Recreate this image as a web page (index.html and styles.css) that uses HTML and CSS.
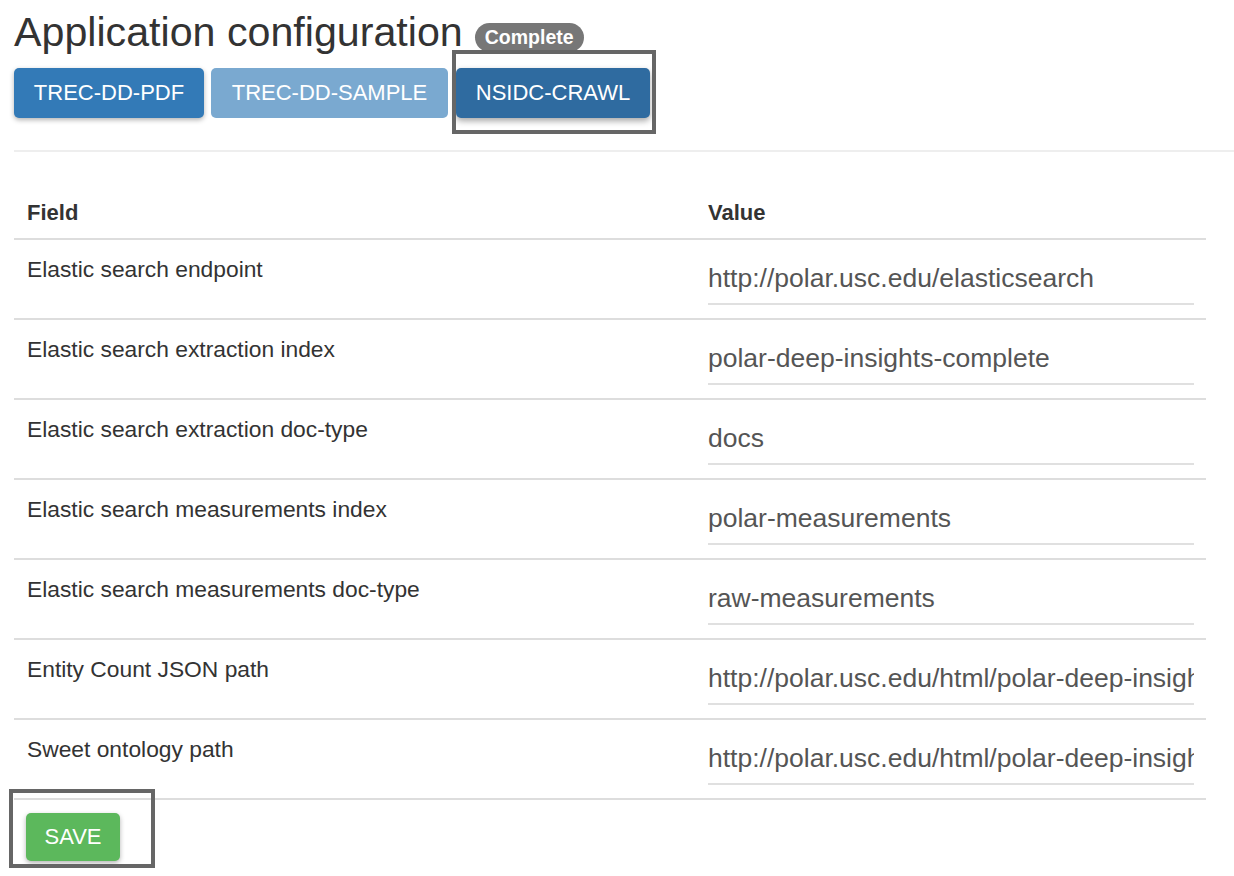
FILE: index.html
```html
<!DOCTYPE html>
<html>
<head>
<meta charset="utf-8">
<link rel="stylesheet" href="styles.css">
</head>
<body>
<div class="page">
  <div class="title-row">
    <h3 class="title">Application configuration</h3>
    <span class="badge">Complete</span>
  </div>
  <div class="tabs">
    <button class="btn btn-primary">TREC-DD-PDF</button>
    <button class="btn btn-disabled">TREC-DD-SAMPLE</button>
    <span class="highlight-wrap">
      <button class="btn btn-active">NSIDC-CRAWL</button>
      <span class="annot annot-tab"></span>
    </span>
  </div>
  <hr class="rule">
  <table class="cfg">
    <thead>
      <tr><th class="col-field">Field</th><th>Value</th></tr>
    </thead>
    <tbody>
      <tr><td class="label">Elastic search endpoint</td><td><input class="field" value="http://polar.usc.edu/elasticsearch"></td></tr>
      <tr><td class="label">Elastic search extraction index</td><td><input class="field" value="polar-deep-insights-complete"></td></tr>
      <tr><td class="label">Elastic search extraction doc-type</td><td><input class="field" value="docs"></td></tr>
      <tr><td class="label">Elastic search measurements index</td><td><input class="field" value="polar-measurements"></td></tr>
      <tr><td class="label">Elastic search measurements doc-type</td><td><input class="field" value="raw-measurements"></td></tr>
      <tr><td class="label">Entity Count JSON path</td><td><input class="field" value="http://polar.usc.edu/html/polar-deep-insights/entity-count.json"></td></tr>
      <tr><td class="label">Sweet ontology path</td><td><input class="field" value="http://polar.usc.edu/html/polar-deep-insights/sweet.json"></td></tr>
    </tbody>
  </table>
  <div class="actions">
    <span class="highlight-wrap">
      <button class="btn btn-success">SAVE</button>
      <span class="annot annot-save"></span>
    </span>
  </div>
</div>
</body>
</html>
```

FILE: styles.css
```css
* { box-sizing: border-box; }
html, body { margin: 0; padding: 0; background: #fff; }
body {
  font-family: "Liberation Sans", Arial, Helvetica, sans-serif;
  color: #333;
  font-size: 22.8px;
}
.page {
  padding: 8px 0 40px 14px;
}
.title-row {
  display: flex;
  align-items: baseline;
  gap: 12px;
}
.title {
  margin: 0;
  font-size: 41.2px;
  line-height: 48px;
  font-weight: 400;
  color: #333;
}
.badge {
  display: inline-block;
  background: #777;
  color: #fff;
  font-weight: 700;
  font-size: 19.5px;
  line-height: 29px;
  height: 29px;
  padding: 0 10px;
  border-radius: 15px;
  position: relative;
  top: -2px;
}
.tabs {
  display: flex;
  align-items: center;
  margin-top: 12px;
}
.btn {
  font-family: inherit;
  font-size: 22px;
  height: 50px;
  padding: 0 19px;
  border: none;
  border-radius: 5px;
  color: #fff;
  cursor: pointer;
  line-height: 50px;
}
.btn-primary {
  width: 190px;
  background: #337ab7;
  box-shadow: 0 2px 5px rgba(0,0,0,0.3);
}
.btn-disabled {
  width: 237px;
  margin-left: 7px;
  background: #7aa9d0;
}
.btn-active {
  width: 194px;
  background: #2f6ba0;
  box-shadow: 0 3px 6px rgba(0,0,0,0.35);
}
.btn-success {
  width: 94px;
  height: 48px;
  line-height: 48px;
  padding: 0;
  background: #5cb85c;
  box-shadow: 0 2px 5px rgba(0,0,0,0.3);
}
.highlight-wrap {
  position: relative;
  display: inline-flex;
}
.tabs .highlight-wrap { margin-left: 8px; }
.annot {
  position: absolute;
  border: 4px solid #666;
  pointer-events: none;
}
.annot-tab {
  left: -4px;
  top: -18px;
  right: -6px;
  bottom: -16px;
}
.annot-save {
  left: -17px;
  top: -24px;
  right: -35px;
  bottom: -7px;
}
.rule {
  margin: 32px 0 0 0;
  border: 0;
  border-top: 2px solid #eee;
  height: 0;
}
.cfg {
  width: 1192px;
  border-collapse: collapse;
  margin-top: 32px;
  table-layout: fixed;
}
.cfg th {
  text-align: left;
  font-weight: 700;
  font-size: 22px;
  line-height: 32px;
  padding: 13px 13px 9px 13px;
  border-bottom: 2px solid #ddd;
  vertical-align: bottom;
}
.col-field { width: 681px; }
.cfg td {
  padding: 13px 13px;
  border-bottom: 2px solid #ddd;
  vertical-align: top;
}
.label {
  font-size: 22.8px;
  line-height: 32.6px;
  color: #333;
}
.field {
  display: block;
  width: 486px;
  height: 52px;
  border: 0;
  border-bottom: 2px solid #e0e0e0;
  padding: 0;
  font-family: inherit;
  font-size: 26.5px;
  color: #555;
  background: transparent;
  outline: none;
}
.actions {
  padding: 13px 0 0 12px;
}
```
